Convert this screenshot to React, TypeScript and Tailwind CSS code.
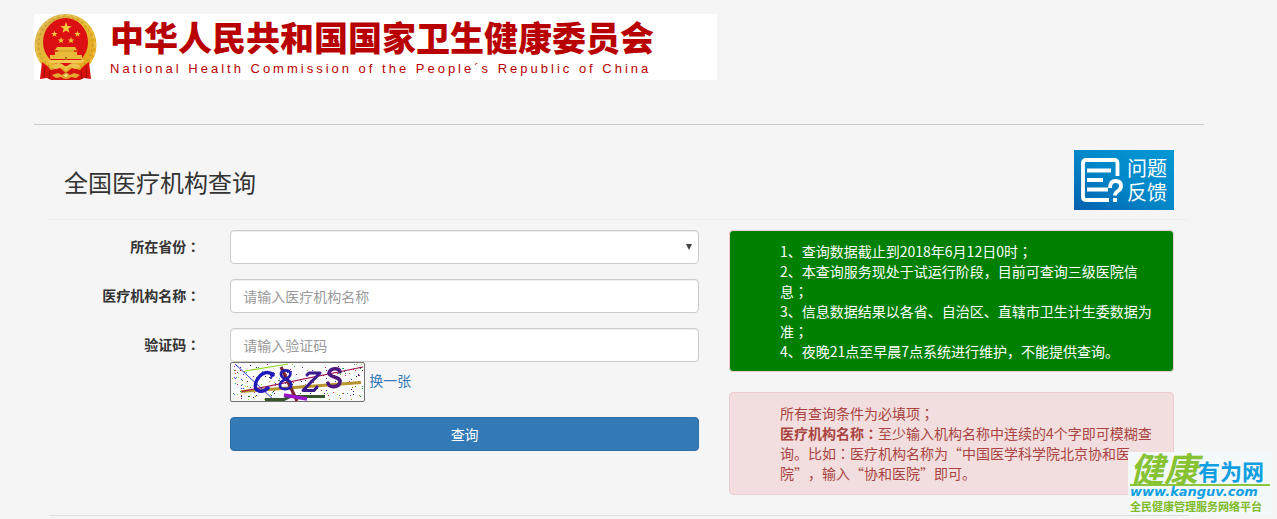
import type { ReactNode } from 'react';

function Star({ x, y, r }: { x: number; y: number; r: number }) {
  const points = Array.from({ length: 10 }, (_, i) => {
    const radius = i % 2 === 0 ? r : r * 0.4;
    const angle = (Math.PI / 5) * i - Math.PI / 2;
    return `${x + radius * Math.cos(angle)},${y + radius * Math.sin(angle)}`;
  }).join(' ');
  return <polygon points={points} fill="#f0cc3a" />;
}

function Emblem() {
  return (
    <svg viewBox="0 0 64 66" className="h-[66px] w-16 shrink-0" role="img" aria-label="国徽">
      <defs>
        <linearGradient id="gold" x1="0" y1="0" x2="1" y2="1">
          <stop offset="0" stopColor="#d6b052" />
          <stop offset="0.5" stopColor="#e6b92e" />
          <stop offset="1" stopColor="#e79f14" />
        </linearGradient>
      </defs>
      <ellipse cx="31.500" cy="31" rx="31" ry="31" fill="url(#gold)" />
      <ellipse cx="31.500" cy="30.500" rx="27" ry="27.500" fill="none" stroke="#c8952a" strokeWidth="1.200" strokeDasharray="2 3" />
      <ellipse cx="31.500" cy="31" rx="29.500" ry="29.500" fill="none" stroke="#f0d480" strokeWidth="0.800" strokeDasharray="3 4" />
      <ellipse cx="31.500" cy="28" rx="22.500" ry="24" fill="#dc0f12" />
      <Star x={32} y={14} r={6} />
      <Star x={20.500} y={20} r={3.400} />
      <Star x={43.500} y={20} r={3.400} />
      <Star x={27} y={26.500} r={3.400} />
      <Star x={37} y={26.500} r={3.400} />
      <path d="M23 33 H41 L43 36 H21 Z M24 36 H40 V39 H24 Z M21 38 H43 V41 H21 Z M16 41 H48 V45 H16 Z" fill="#e9b93a" />
      <path d="M20 37 H44" stroke="#c98a1a" strokeWidth="0.800" />
      <path d="M31 43 h2 v3 h-2 Z" fill="#b8660f" />
      <path d="M13 46 H51 L48 49 H16 Z" fill="#f0c94e" />
      <path d="M8 48 Q13 51 17 56 L26 54 L32 59 L38 54 L46 56 Q50 51 55 48 L57 65 L50 64 L46 66 H17 L13 64 L6 65 Z" fill="#d8120f" />
      <path d="M17 53 Q23 47 28 50 L32 53 L36 50 Q41 47 47 53 L41 55 L36 53 L32 57 L28 53 L22 55 Z" fill="#ecc04a" />
      <path d="M11 53 L10 64 M16 57 L15 65 M52 53 L53 64 M47 57 L48 65" stroke="#a00c0e" strokeWidth="1" />
      <path d="M18 61 L24 59 L28 61 Q32 57 36 61 L40 59 L46 61 L42 64 L37 63 Q32 67 27 63 L22 64 Z" fill="#e2aa30" />
      <circle cx="32" cy="61.500" r="2.200" fill="#f6da74" stroke="#b9801a" strokeWidth="0.600" />
    </svg>
  );
}

const noiseColors = ['#c81ea0', '#2b2bd0', '#1c9a34', '#b8860b', '#d02b2b', '#26a6b8', '#703090', '#303030', '#8ae020'];

const noise = (() => {
  let seed = 41;
  const next = () => {
    seed = (seed * 16807) % 2147483647;
    return seed / 2147483647;
  };
  return Array.from({ length: 200 }, () => ({
    x: 2 + Math.floor(next() * 131),
    y: 2 + Math.floor(next() * 36),
    color: noiseColors[Math.floor(next() * noiseColors.length)],
  }));
})();

function Captcha() {
  return (
    <svg viewBox="0 0 135 40" className="h-10 w-[135px] shrink-0" role="img" aria-label="验证码图片">
      <rect x="0.500" y="0.500" width="134" height="39" rx="1.500" fill="#fbfbfb" stroke="#707070" />
      {noise.map((d, i) => (
        <rect key={i} x={d.x} y={d.y} width="1" height="1" fill={d.color} />
      ))}
      <path d="M15 9 L58 2" stroke="#93dc28" strokeWidth="1.200" />
      <path d="M11 29.500 L131 20.500" stroke="#b8942e" strokeWidth="2.800" />
      <path d="M5 2 L45 39" stroke="#3434c8" strokeWidth="1" />
      <path d="M12 29.500 L133 5" stroke="#a01050" strokeWidth="1.200" />
      <path d="M51 5 L67 39" stroke="#7a2430" strokeWidth="3.200" />
      <path d="M35 37.500 H54 L60 34.500 H95" fill="none" stroke="#385530" strokeWidth="3.200" />
      <path d="M54 33 L77 37" stroke="#9814cc" strokeWidth="3.600" />
      <g fill="none" strokeLinecap="round" strokeLinejoin="round">
        <path d="M43 13 C39 9 33 10 29 15 C24 21 24 28 29 29 C33 30 36 28 38 26" stroke="#2018bc" strokeWidth="3.400" />
        <path d="M43 11 L41 16" stroke="#2018bc" strokeWidth="2" />
        <path d="M56 17 C50 15 49 9 55 8.500 C62 8 62 14 56 17 C47 21 49 27 55 27 C63 27 63 20 56 17" stroke="#281cac" strokeWidth="2.800" />
        <path d="M77 13 L79 11 H90 L73 28.500 H84 L87 25" stroke="#38188c" strokeWidth="3" />
        <path d="M110 10 C110 5 100 6 99 11 C99 16 111 14 110 20 C109 26 98 26 98 21" stroke="#4c1880" strokeWidth="3.600" />
      </g>
    </svg>
  );
}

function FeedbackButton() {
  return (
    <button
      type="button"
      className="flex h-[60px] w-[100px] items-center gap-1 bg-linear-to-tr from-[#0560ae] via-[#0388c9] to-[#0798d4] pl-[6px] text-left text-white"
    >
      <svg viewBox="0 0 43 46" className="h-[46px] w-[43px] shrink-0" fill="none" stroke="#fff" aria-hidden="true">
        <path d="M37.500 19 V6 Q37.500 3 34.500 3 H6 Q3 3 3 6 V40 Q3 43 6 43 H29" strokeWidth="3.800" />
        <path d="M7 13.500 H31 M7 23 H23 M7 32.500 H28" strokeWidth="4.200" />
        <path d="M30 31 Q30 24 35.500 24 Q41 24 41 29 Q41 32 38 34 Q35 36 35 38.500" strokeWidth="3.800" />
        <path d="M33 43 H37" strokeWidth="4" />
      </svg>
      <span className="text-[20px] leading-6">
        问题
        <br />
        反馈
      </span>
    </button>
  );
}

function Mark({ children }: { children: string }) {
  return (
    <span lang="zh-TW" className="font-['Noto_Sans_CJK_TC',sans-serif]">
      {children}
    </span>
  );
}

const inputClass =
  'block h-[34px] w-full rounded border border-[#ccc] bg-white px-3 text-[14px] text-[#555] shadow-[inset_0_1px_1px_rgba(0,0,0,0.075)] placeholder:text-[#999]';

function Field({ id, label, children }: { id: string; label: string; children: ReactNode }) {
  return (
    <div className="mb-[15px] grid grid-cols-12">
      <label htmlFor={id} className="col-span-3 px-[15px] pt-[6px] text-right leading-5 font-bold">
        {label}
        <Mark>：</Mark>
      </label>
      <div className="col-span-9 px-[15px]">{children}</div>
    </div>
  );
}

function Watermark() {
  return (
    <div className="absolute right-[5px] bottom-[5px] flex w-36 flex-col bg-[#f3f8fa] px-[2px] whitespace-nowrap">
      <div className="flex items-end border-b-2 border-[#8cc63f] leading-8">
        <span className="text-[34px] font-bold text-[#86c232] italic">健康</span>
        <span className="text-[22px] leading-7 font-bold text-[#109fe0]">有为网</span>
      </div>
      <span className="font-['DejaVu_Sans',sans-serif] text-[13px] leading-3 font-bold text-[#109fe0] italic">
        www.kanguv.com
      </span>
      <span className="text-[11px] leading-4 font-bold text-[#7fbb28]">全民健康管理服务网络平台</span>
    </div>
  );
}

export default function App() {
  return (
    <div
      lang="zh-CN"
      className="relative min-h-screen bg-[#f5f5f5] font-['Noto_Sans_CJK_SC',sans-serif] text-[14px] leading-5 text-[#333] [text-spacing-trim:space-all]"
    >
      <div className="ml-[34px] max-w-[1170px] pt-[14px]">
        <header className="border-b border-[#ccc] pb-11">
          <div className="flex max-w-[683px] gap-3 bg-white whitespace-nowrap text-[#b80000]">
            <Emblem />
            <div className="pt-[2px]">
              <p className="text-[34px] leading-[42px] font-black">中华人民共和国国家卫生健康委员会</p>
              <p className="font-['Liberation_Sans',sans-serif] text-[13px] leading-[22px] tracking-[3px]">
                National Health Commission of the People´s Republic of China
              </p>
            </div>
          </div>
        </header>

        <main className="px-[15px]">
          <div className="mb-[10px] flex items-end justify-between border-b border-[#eee] px-[15px] pt-[25px] pb-[9px]">
            <h1 className="pb-3 text-[24px] leading-8">全国医疗机构查询</h1>
            <FeedbackButton />
          </div>

          <div className="grid grid-cols-12 border-b border-[#ddd] pb-5">
            <form className="col-span-7" onSubmit={(e) => e.preventDefault()}>
              <Field id="province" label="所在省份">
                <div className="relative">
                  <select id="province" className={`${inputClass} appearance-none`}>
                    <option value=""></option>
                  </select>
                  <svg viewBox="0 0 6 6" className="pointer-events-none absolute top-[14px] right-[7px] size-[6px]" aria-hidden="true">
                    <path d="M0 0 H6 L3 6 Z" fill="#444" />
                  </svg>
                </div>
              </Field>
              <Field id="hospital" label="医疗机构名称">
                <input id="hospital" type="text" placeholder="请输入医疗机构名称" className={inputClass} />
              </Field>
              <Field id="code" label="验证码">
                <input id="code" type="text" placeholder="请输入验证码" className={inputClass} />
                <div className="flex items-start gap-1">
                  <Captcha />
                  <a href="#captcha" className="pt-2 text-[#337ab7]">
                    换一张
                  </a>
                </div>
              </Field>
              <div className="grid grid-cols-12">
                <div className="col-span-9 col-start-4 px-[15px]">
                  <button
                    type="submit"
                    className="h-[34px] w-full rounded border border-[#2e6da4] bg-[#337ab7] text-white"
                  >
                    查询
                  </button>
                </div>
              </div>
            </form>

            <div className="col-span-5 flex flex-col gap-5 px-[15px]">
              <div className="rounded border border-[#ebccd1] bg-[#008000] py-[10px] pr-[15px] pl-[50px] text-white">
                <p>
                  1、查询数据截止到2018年6月12日0时<Mark>；</Mark>
                </p>
                <p>
                  2、本查询服务现处于试运行阶段，目前可查询三级医院信息<Mark>；</Mark>
                </p>
                <p>
                  3、信息数据结果以各省、自治区、直辖市卫生计生委数据为准<Mark>；</Mark>
                </p>
                <p>4、夜晚21点至早晨7点系统进行维护，不能提供查询。</p>
              </div>
              <div className="rounded border border-[#ebccd1] bg-[#f2dede] pt-[10px] pr-[15px] pb-[11px] pl-[50px] text-[#a94442]">
                <p>
                  所有查询条件为必填项<Mark>；</Mark>
                </p>
                <p>
                  <strong>
                    医疗机构名称<Mark>：</Mark>
                  </strong>
                  至少输入机构名称中连续的4个字即可模糊查询。比如<Mark>：</Mark>
                  医疗机构名称为“中国医学科学院北京协和医院”，输入“协和医院”即可。
                </p>
              </div>
            </div>
          </div>
        </main>
      </div>
      <Watermark />
    </div>
  );
}
